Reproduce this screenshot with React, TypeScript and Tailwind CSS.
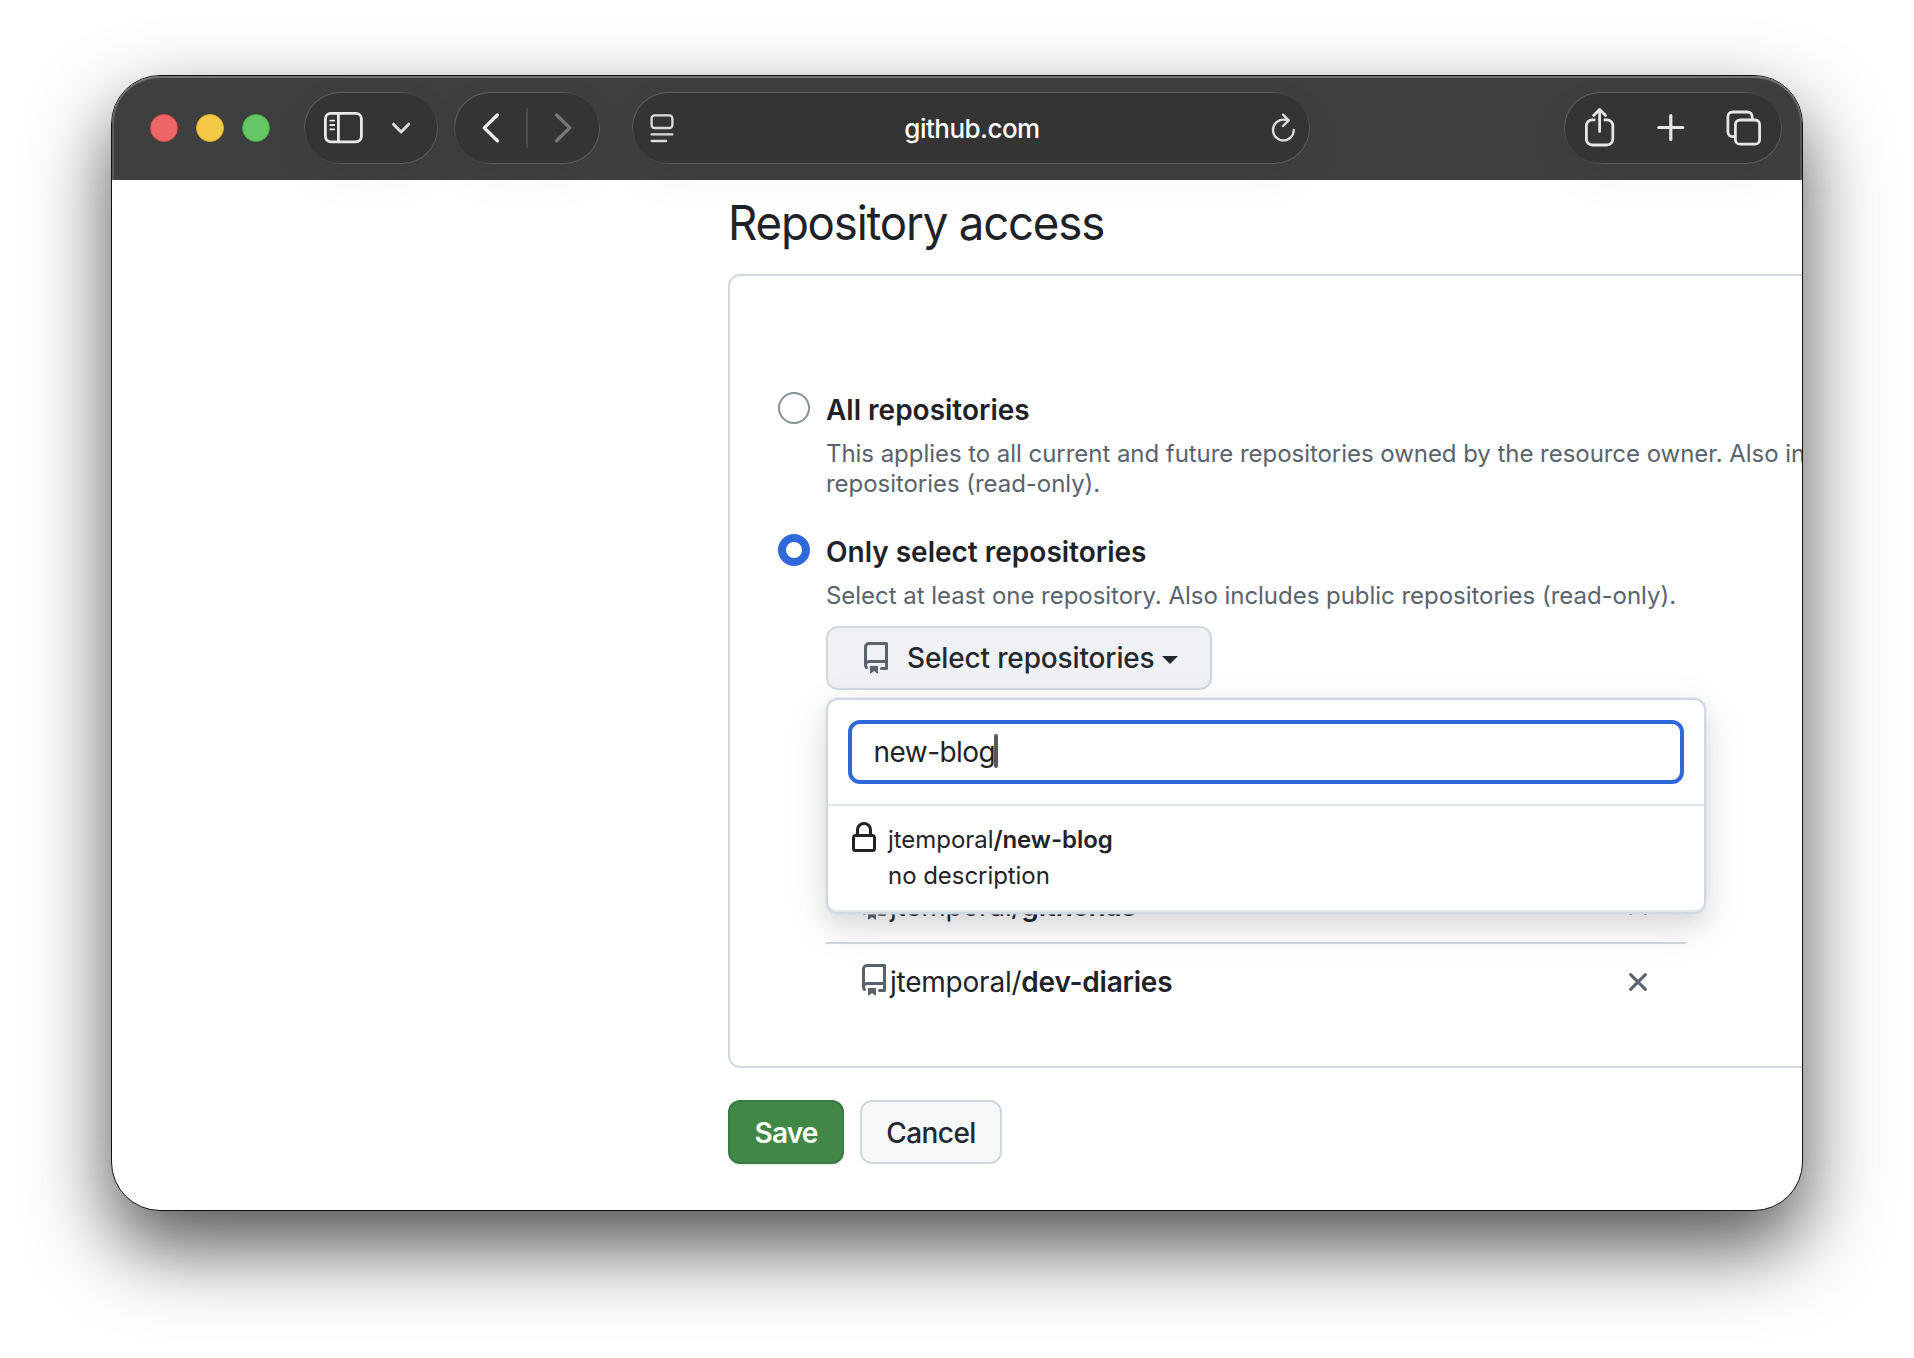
import React, { useState } from 'react';

const RepoIcon = () => (
  <svg viewBox="0 0 16 16" className="w-8 h-8 shrink-0 fill-[#59636e]">
    <path d="M2 2.5A2.5 2.5 0 0 1 4.5 0h8.75a.75.75 0 0 1 .75.75v12.5a.75.75 0 0 1-.75.75h-2.5a.75.75 0 0 1 0-1.5h1.75v-2h-8a1 1 0 0 0-.714 1.7.75.75 0 1 1-1.072 1.05A2.495 2.495 0 0 1 2 11.5Zm10.5-1h-8a1 1 0 0 0-1 1v6.708A2.486 2.486 0 0 1 4.5 9h8ZM5 12.25a.25.25 0 0 1 .25-.25h3.5a.25.25 0 0 1 .25.25v3.25a.25.25 0 0 1-.4.2l-1.45-1.087a.249.249 0 0 0-.3 0L5.4 15.7a.25.25 0 0 1-.4-.2Z" />
  </svg>
);

const LockIcon = () => (
  <svg viewBox="0 0 16 16" className="w-8 h-8 shrink-0 fill-[#1f2328]">
    <path d="M4 4a4 4 0 0 1 8 0v2h.25c.966 0 1.75.784 1.75 1.75v5.5A1.75 1.75 0 0 1 12.25 15h-8.5A1.75 1.75 0 0 1 2 13.25v-5.5C2 6.784 2.784 6 3.75 6H4Zm8.25 3.5h-8.5a.25.25 0 0 0-.25.25v5.5c0 .138.112.25.25.25h8.5a.25.25 0 0 0 .25-.25v-5.5a.25.25 0 0 0-.25-.25ZM10.5 6V4a2.5 2.5 0 1 0-5 0v2Z" />
  </svg>
);

const CloseIcon = () => (
  <svg viewBox="0 0 18 18" className="w-[18px] h-[18px] shrink-0" fill="none" stroke="#59636e" strokeWidth="3" strokeLinecap="round">
    <path d="M1.6 1.6 16.4 16.4M16.4 1.6 1.6 16.4" />
  </svg>
);

const pill =
  "h-[72px] shrink-0 flex items-center rounded-full border-[1.5px] border-transparent shadow-[0_14px_50px_rgba(0,0,0,0.04)] [background:linear-gradient(#343434,#343434)_padding-box,linear-gradient(45deg,#3a3a3a_14px,#5e5e5e_30px,#5e5e5e_calc(100%_-_30px),#3a3a3a_calc(100%_-_14px))_border-box]";

const Toolbar = () => (
  <div className="relative z-20 h-[104px] shrink-0 bg-[#3f3f3f] flex items-center pl-[38px] pr-5 shadow-[inset_0_2px_0_#737373,inset_2px_0_0_#5a5a5a,inset_-2px_0_0_#5a5a5a] rounded-t-[48px]">
    <div className="flex gap-[18px]">
      <span className="w-7 h-7 rounded-full bg-[#ee6667] border border-[#dc4a48]" />
      <span className="w-7 h-7 rounded-full bg-[#f3ca45] border border-[#dcae22]" />
      <span className="w-7 h-7 rounded-full bg-[#65c567] border border-[#46ae46]" />
    </div>

    {/* Sidebar toggle */}
    <div className={`${pill} w-[134px] ml-[34px]`}>
      <svg viewBox="0 0 130 68" className="w-full h-[68px]" fill="none" stroke="#e9e9e9" strokeWidth="2.8" strokeLinecap="round" strokeLinejoin="round">
        <rect x="19.4" y="19.4" width="36" height="28.4" rx="5.5" />
        <path d="M32.4 19.4v28.4" />
        <path d="M24.2 26.6h4M24.2 31h4M24.2 35.3h4" strokeWidth="1.8" />
        <path d="m87.5 30.2 7.6 7.8 7.6-7.8" stroke="#dcdcdc" strokeWidth="3" />
      </svg>
    </div>

    {/* History */}
    <div className={`${pill} w-[146px] ml-4`}>
      <svg viewBox="0 0 142 68" className="w-full h-[68px]" fill="none" strokeWidth="3.4" strokeLinecap="round" strokeLinejoin="round">
        <path d="M41.4 21 28.3 33.9 41.4 46.8" stroke="#ececec" />
        <path d="M71 14v40" stroke="#4b4b4b" strokeWidth="2" strokeLinecap="butt" />
        <path d="M100.6 21 113.7 33.9 100.6 46.8" stroke="#767676" />
      </svg>
    </div>

    {/* Address bar */}
    <div className={`${pill} w-[678px] ml-8 pl-[17px] pr-[14px] justify-between`}>
      <svg viewBox="0 0 24 30" className="w-6 h-[30px]" fill="none" stroke="#dcdcdc" strokeWidth="2.3" strokeLinecap="round">
        <rect x="1.6" y="2.4" width="20.8" height="12.6" rx="3" />
        <path d="M1.6 21.4h20.8M1.6 28h14.6" />
      </svg>
      <span className="text-[26px] leading-8 mt-px mr-px text-white font-medium tracking-[-0.02em]">github.com</span>
      <svg viewBox="0 0 24 30" className="w-6 h-[30px]" fill="none" stroke="#dcdcdc" strokeWidth="2.3" strokeLinecap="round" strokeLinejoin="round">
        <path d="M17.4 7.4C16 6.9 14.4 6.6 12.4 6.6A10.4 10.4 0 1 0 22.8 17" />
        <path d="M12 1.6 17.8 7.4 12 13" />
      </svg>
    </div>

    {/* Share, new tab, tab overview */}
    <div className={`${pill} w-[218px] ml-auto`}>
      <svg viewBox="0 0 214 68" className="w-full h-[68px]" fill="none" stroke="#e6e6e6" strokeWidth="2.8" strokeLinecap="round" strokeLinejoin="round">
        <path d="M29.4 25.8h-3.2a5.8 5.8 0 0 0-5.8 5.8v13.6a5.8 5.8 0 0 0 5.8 5.8H41a5.8 5.8 0 0 0 5.8-5.8V31.6a5.8 5.8 0 0 0-5.8-5.8h-3.2" strokeLinecap="butt" />
        <path d="M33.6 37.6V15.8M27.6 21.4l6-6 6 6" />
        <path d="M92.8 33.5h24M104.8 21.5v24" strokeWidth="3.2" />
        <rect x="169.4" y="26" width="24.2" height="24.2" rx="4.5" />
        <path d="M168.4 42.6h-2a4.5 4.5 0 0 1-4.5-4.5V22.5a4.5 4.5 0 0 1 4.5-4.5h15.2a4.5 4.5 0 0 1 4.5 4.5v2.6" strokeLinecap="butt" />
      </svg>
    </div>
  </div>
);

const RepoRow = ({ owner, name }: { owner: string; name: string }) => (
  <div className="h-[74px] shrink-0 flex items-center pt-0.5 pl-8 pr-[39px]">
    <span className="mb-1">
      <RepoIcon />
    </span>
    <span className="text-[28px] leading-[42px] tracking-[-0.008em] text-[#1f2328]">
      {owner}/<b className="font-semibold">{name}</b>
    </span>
    <span className="ml-auto">
      <CloseIcon />
    </span>
  </div>
);

const App = () => {
  const [access, setAccess] = useState<'all' | 'select'>('select');

  const radio = (checked: boolean) =>
    checked
      ? 'w-8 h-8 shrink-0 rounded-full border-8 border-[#2f68d8] bg-white'
      : 'w-8 h-8 shrink-0 rounded-full border-2 border-[#868f9a] bg-white';

  return (
    <div className="w-[1914px] h-[1358px] overflow-hidden bg-white pt-[75px] pl-[111px] font-['Inter',sans-serif] text-[#1f2328] whitespace-nowrap">
      <div className="w-[1692px] h-[1136px] rounded-[49px] border border-[#111] bg-white shadow-[0_36px_80px_rgba(0,0,0,0.68)]">
        <div className="w-full h-full rounded-[48px] overflow-hidden flex flex-col">
          <Toolbar />

          <main className="ml-[616px] flex flex-col">
            <h2 className="mt-[11px] text-[48px] leading-[64px] font-normal tracking-[-1.25px] origin-left scale-x-95">Repository access</h2>

            <section className="mt-[19px] h-[794px] w-[1200px] rounded-xl border-2 border-[#d1d9e0] pl-12 pt-[116px]">
              <div className="flex gap-4">
                <button onClick={() => setAccess('all')} className={radio(access === 'all')} aria-label="All repositories" />
                <div>
                  <div className="text-[28px] leading-9 font-semibold">All repositories</div>
                  <p className="mt-[11px] text-2xl leading-[30px] tracking-[-0.045px] text-[#59636e]">
                    This applies to all current and future repositories owned by the resource owner. Also includes public
                    <br />
                    repositories (read-only).
                  </p>
                </div>
              </div>

              <div className="mt-[35px] flex gap-4">
                <button onClick={() => setAccess('select')} className={radio(access === 'select')} aria-label="Only select repositories" />
                <div className="w-[880px]">
                  <div className="text-[28px] leading-9 font-semibold">Only select repositories</div>
                  <p className="mt-[11px] text-2xl leading-[30px] tracking-[-0.03px] text-[#59636e]">
                    Select at least one repository. Also includes public repositories (read-only).
                  </p>

                  <div className="relative mt-[15px]">
                    <button className="w-[386px] h-16 flex items-center pl-8 rounded-xl border-2 border-[#d1d9e0] bg-[#eff1f5] text-[28px] font-medium text-[#25292e]">
                      <RepoIcon />
                      <span className="ml-[15px] tracking-[-0.14px]">Select repositories</span>
                      <span className="ml-[7px] mt-1 border-x-8 border-t-8 border-x-transparent border-t-[#25292e]" />
                    </button>

                    {/* Repository picker */}
                    <div className="absolute left-0 top-[72px] z-10 w-[880px] h-[216px] rounded-xl border-2 border-[#d1d9e0] bg-white shadow-[0_0_0_1px_rgba(209,217,224,0.4),0_12px_24px_rgba(37,41,46,0.12),0_12px_48px_rgba(37,41,46,0.08)]">
                      <div className="p-5 border-b-2 border-[#dfe4e9]">
                        <div className="h-16 flex items-center rounded-xl border-4 border-[#2f68d8] pl-[21.5px] text-[28px]">
                          <span className="tracking-[-0.55px]">new-blog</span>
                          <span className="-ml-px mb-0.5 w-[3.5px] h-[34px] rounded-sm bg-[#595959]" />
                        </div>
                      </div>
                      <div className="h-[106px] flex pl-5 pt-4 border-b-2 border-[#e3e8ec] rounded-b-[10px]">
                        <LockIcon />
                        <div className="ml-2 text-2xl leading-9 tracking-[-0.05px]">
                          <div>
                            jtemporal<b className="font-semibold">/new-blog</b>
                          </div>
                          <div>no description</div>
                        </div>
                      </div>
                    </div>
                  </div>

                  <div className="mt-[178px] w-[860px]">
                    <RepoRow owner="jtemporal" name="gitfichas" />
                    <div className="h-0.5 bg-[#d1d9e0]" />
                    <RepoRow owner="jtemporal" name="dev-diaries" />
                  </div>
                </div>
              </div>
            </section>

            <div className="mt-8 flex gap-4 text-[28px] font-medium">
              <button className="w-[116px] h-16 pt-0.5 rounded-xl border-2 border-[#3b7b40] bg-[#418745] text-white font-semibold tracking-[-0.03em] shadow-[0_2px_2px_rgba(31,35,40,0.08)]">Save</button>
              <button className="w-[142px] h-16 pt-0.5 rounded-xl border-2 border-[#d1d9e0] bg-[#f6f8fa] text-[#25292e] tracking-[-0.02em]">Cancel</button>
            </div>
          </main>
        </div>
      </div>
    </div>
  );
};

export default App;
